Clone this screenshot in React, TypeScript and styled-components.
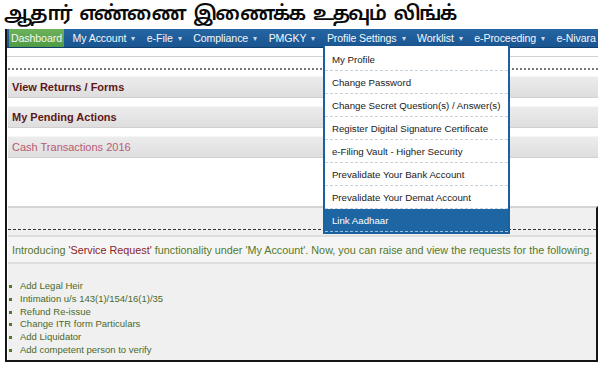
import styled, { createGlobalStyle } from "styled-components";

const GlobalStyle = createGlobalStyle`
  body {
    margin: 0;
    background: #ffffff;
    font-family: "Liberation Sans", Arial, sans-serif;
  }
`;

const navItems = [
  { name: "Dashboard", caret: false, active: true },
  { name: "My Account", caret: true },
  { name: "e-File", caret: true },
  { name: "Compliance", caret: true },
  { name: "PMGKY", caret: true },
  { name: "Profile Settings", caret: true, menu: true },
  { name: "Worklist", caret: true },
  { name: "e-Proceeding", caret: true },
  { name: "e-Nivara", caret: false },
];

const profileMenu = [
  "My Profile",
  "Change Password",
  "Change Secret Question(s) / Answer(s)",
  "Register Digital Signature Certificate",
  "e-Filing Vault - Higher Security",
  "Prevalidate Your Bank Account",
  "Prevalidate Your Demat Account",
  "Link Aadhaar",
];

const services = [
  "Add Legal Heir",
  "Intimation u/s 143(1)/154/16(1)/35",
  "Refund Re-issue",
  "Change ITR form Particulars",
  "Add Liquidator",
  "Add competent person to verify",
];

const App = () => {
  return (
    <>
      <GlobalStyle />
      <Page>
        <Headline>ஆதார் எண்ணை இணைக்க உதவும் லிங்க்</Headline>
        <Frame>
          <NavBar>
            {navItems.map((item) => (
              <NavItem key={item.name} active={item.active}>
                {item.name}
                {item.caret && <Caret>▾</Caret>}
                {item.menu && (
                  <Dropdown>
                    {profileMenu.map((entry, i) => (
                      <MenuItem key={entry} selected={i === profileMenu.length - 1}>
                        {entry}
                      </MenuItem>
                    ))}
                  </Dropdown>
                )}
              </NavItem>
            ))}
          </NavBar>

          <TopSpacer />
          <DottedRule />

          <Band>View Returns / Forms</Band>
          <Band>My Pending Actions</Band>
          <Band light>Cash Transactions 2016</Band>

          <LowerPanel>
            <DashedRule />
            <Notice>
              Introducing <Red>'Service Request'</Red> functionality under 'My
              Account'. Now, you can raise and view the requests for the
              following.
            </Notice>
            <ServiceList>
              {services.map((s) => (
                <ServiceItem key={s}>{s}</ServiceItem>
              ))}
            </ServiceList>
          </LowerPanel>
        </Frame>
      </Page>
    </>
  );
};

export default App;

const Page = styled.div`
  width: 600px;
  height: 367px;
  overflow: hidden;
`;

const Headline = styled.h1`
  margin: 0;
  padding: 0 0 0 4px;
  height: 29px;
  font-family: "Noto Sans Tamil", "Noto Sans", "DejaVu Sans", sans-serif;
  font-size: 20px;
  font-weight: 600;
  line-height: 30px;
  letter-spacing: -1.8px;
  word-spacing: 5px;
  color: #0a0a0a;
  white-space: nowrap;
`;

const Frame = styled.div`
  margin-left: 5px;
  width: 591px;
  height: 331px;
  border-left: 2px solid #151515;
  border-bottom: 2px solid #151515;
  display: flex;
  flex-direction: column;
`;

const NavBar = styled.nav`
  height: 18px;
  padding-left: 2px;
  background: linear-gradient(#2466a3, #1a5590);
  border-bottom: 1px solid #0f3f6e;
  display: flex;
  align-items: stretch;
  gap: 3.6px;
  position: relative;
  z-index: 2;
  white-space: nowrap;
`;

const NavItem = styled.div<{ active?: boolean }>`
  position: relative;
  display: flex;
  align-items: center;
  padding: 0 ${(p) => (p.active ? "2px" : "4px")};
  margin-right: ${(p) => (p.active ? "1px" : "0")};
  background: ${(p) => (p.active ? "linear-gradient(#6cb25a, #4f9a43)" : "transparent")};
  color: #f4f7fb;
  font-size: 10.6px;
  letter-spacing: -0.1px;
  white-space: nowrap;
`;

const Caret = styled.span`
  margin-left: 5px;
  font-size: 8px;
  color: #c9d8ea;
`;

const Dropdown = styled.div`
  position: absolute;
  left: 0;
  top: 17px;
  width: 183px;
  background: #ffffff;
  border: 2px solid #1b61a0;
  border-top: none;
  padding-top: 2px;
  display: flex;
  flex-direction: column;
  letter-spacing: 0;
`;

const MenuItem = styled.div<{ selected?: boolean }>`
  height: 22px;
  padding-left: 7px;
  display: flex;
  align-items: center;
  font-size: 9.7px;
  color: ${(p) => (p.selected ? "#ffffff" : "#1a1a1a")};
  background: ${(p) => (p.selected ? "#1e65a3" : "transparent")};
  border-bottom: 1px dashed ${(p) => (p.selected ? "#9dc0e0" : "#c7d3dd")};
`;

const TopSpacer = styled.div`
  height: 8px;
  border-bottom: 1px solid #d2d2d2;
`;

const DottedRule = styled.div`
  margin-top: 11px;
  margin-left: 1px;
  border-top: 2px dotted #777;
  margin-bottom: 6px;
`;

const Band = styled.div<{ light?: boolean }>`
  margin: 0 0 8px 1px;
  height: 20px;
  padding-left: 4px;
  display: flex;
  align-items: center;
  background: linear-gradient(#ececec, #dedede);
  border-top: 1px solid #f6f6f6;
  border-bottom: 1px solid #d0d0d0;
  font-size: 11px;
  font-weight: ${(p) => (p.light ? 400 : 700)};
  color: ${(p) => (p.light ? "#b95a73" : "#5e1818")};
`;

const LowerPanel = styled.div`
  margin-top: auto;
  height: 152px;
  background: #f0f0f0;
  border-top: 2px solid #d4d4d4;
  border-right: 2px solid #151515;
  margin-left: 1px;
  display: flex;
  flex-direction: column;
`;

const DashedRule = styled.div`
  margin-top: 21px;
  border-top: 1px dashed #333;
`;

const Notice = styled.div`
  margin-top: 5px;
  height: 25px;
  padding-left: 4px;
  display: flex;
  align-items: center;
  background: #f5f5f5;
  border-top: 2px solid #dedede;
  border-bottom: 2px solid #dedede;
  font-size: 10.8px;
  color: #55782c;
  white-space: pre;
`;

const Red = styled.span`
  color: #8a2424;
`;

const ServiceList = styled.ul`
  margin: 16px 0 0;
  padding: 0 0 0 12px;
  list-style: none;
  display: flex;
  flex-direction: column;
`;

const ServiceItem = styled.li`
  position: relative;
  height: 12.8px;
  line-height: 12.8px;
  font-size: 9.5px;
  color: #4b6a2a;

  &::before {
    content: "";
    position: absolute;
    left: -11px;
    top: 5px;
    width: 3px;
    height: 3px;
    background: #4f7a2a;
  }
`;
